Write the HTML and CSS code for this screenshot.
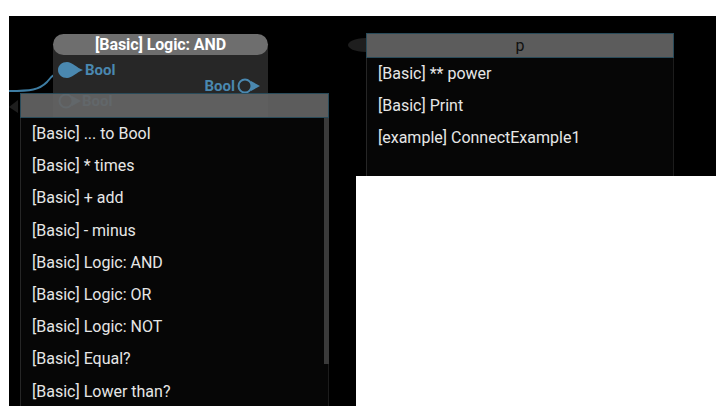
FILE: index.html
```html
<!DOCTYPE html>
<html>
<head>
<meta charset="utf-8">
<link rel="stylesheet" href="styles.css">
</head>
<body>
<div class="canvas">
  <svg class="wires" width="707" height="390" viewBox="0 0 707 390">
    <path d="M0 75 C 22 75, 30 74, 38 66 C 44 58, 50 54, 58 54" fill="none" stroke="#3d7ca2" stroke-width="2"/>
    <path d="M0 91 L9 84 L9 97 Z" fill="#1e1e1e"/>
    <path d="M357 22 C 345 22, 339 26, 339 29 C 339 32, 345 36, 357 36 Z" fill="#1e1e1e"/>
  </svg>

  <div class="node">
    <div class="node-body"></div>
    <div class="node-title">[Basic] Logic: AND</div>
    <div class="slot slot-in">
      <svg class="pin" width="28" height="18" viewBox="0 0 28 18"><path d="M10 1 C 5 1, 1 4.5, 1 9 C 1 13.5, 5 17, 10 17 C 15 17, 20 11, 26 9 C 20 7, 15 1, 10 1 Z" fill="#4a88b0"/></svg>
      <span>Bool</span>
    </div>
    <div class="slot slot-out">
      <span>Bool</span>
      <svg class="pin" width="24" height="16" viewBox="0 0 24 16"><circle cx="8" cy="8" r="6.5" fill="none" stroke="#4a88b0" stroke-width="2"/><path d="M14 3 L23 8 L14 13 Z" fill="#4a88b0"/></svg>
    </div>
    <div class="slot slot-in faint">
      <svg class="pin" width="24" height="16" viewBox="0 0 24 16"><circle cx="8" cy="8" r="6.5" fill="none" stroke="#4a88b0" stroke-width="2"/><path d="M14 3 L23 8 L14 13 Z" fill="#4a88b0"/></svg>
      <span>Bool</span>
    </div>
  </div>

  <div class="menu menu-left">
    <div class="menu-head"></div>
    <div class="menu-list">
      <div class="item">[Basic] ... to Bool</div>
      <div class="item">[Basic] * times</div>
      <div class="item">[Basic] + add</div>
      <div class="item">[Basic] - minus</div>
      <div class="item">[Basic] Logic: AND</div>
      <div class="item">[Basic] Logic: OR</div>
      <div class="item">[Basic] Logic: NOT</div>
      <div class="item">[Basic] Equal?</div>
      <div class="item">[Basic] Lower than?</div>
    </div>
    <div class="scrollbar"></div>
  </div>

  <div class="menu menu-right">
    <div class="menu-head">p</div>
    <div class="menu-list">
      <div class="item">[Basic] ** power</div>
      <div class="item">[Basic] Print</div>
      <div class="item">[example] ConnectExample1</div>
    </div>
  </div>

  <div class="blank"></div>
</div>
</body>
</html>
```

FILE: styles.css
```css
html, body {
  margin: 0;
  padding: 0;
  background: #ffffff;
}
body {
  padding: 16px 0 0 9px;
  font-family: Roboto, "Liberation Sans", sans-serif;
}
.canvas {
  position: relative;
  width: 707px;
  height: 390px;
  background: #000000;
  overflow: hidden;
}
.wires {
  position: absolute;
  left: 0;
  top: 0;
}
.node {
  position: absolute;
  left: 44px;
  top: 18px;
  width: 215px;
  display: flex;
  flex-direction: column;
}
.node-body {
  position: absolute;
  left: 0;
  top: 10px;
  width: 215px;
  height: 86px;
  background: #272727;
  border-radius: 0 0 10px 10px;
}
.node-title {
  position: relative;
  height: 21px;
  line-height: 21px;
  background: #6e6e6e;
  border-radius: 11px;
  color: #ffffff;
  font-weight: bold;
  font-size: 16px;
  text-align: center;
  letter-spacing: -0.1px;
}
.slot {
  position: relative;
  display: flex;
  align-items: center;
  height: 16px;
  font-size: 15px;
  font-weight: bold;
  color: #4a88b0;
}
.slot-in {
  padding-left: 4px;
  margin-top: 7px;
}
.slot-out {
  justify-content: flex-end;
  padding-right: 7px;
  margin-top: 0;
}
.slot-out span {
  margin-right: 2px;
}
.faint {
  margin-top: -1px;
  padding-left: 5px;
}
.menu {
  position: absolute;
  display: flex;
  flex-direction: column;
}
.menu-left {
  left: 11px;
  top: 77px;
  width: 309px;
  height: 330px;
}
.menu-right {
  left: 357px;
  top: 17px;
  width: 308px;
  height: 200px;
}
.menu-head {
  flex-shrink: 0;
  height: 23px;
  line-height: 23px;
  background: rgba(100, 100, 100, 0.92);
  border: 1px solid #294b5a;
  color: #111111;
  font-size: 16px;
  text-align: center;
}
.menu-list {
  flex: 1;
  background: #060606;
  border-left: 1px solid #262626;
  border-right: 1px solid #1c1c1c;
  padding-left: 11px;
}
.item {
  height: 32.2px;
  line-height: 32px;
  color: #e6e6e6;
  font-size: 16px;
  white-space: nowrap;
}
.scrollbar {
  position: absolute;
  right: 0;
  top: 25px;
  width: 5px;
  height: 246px;
  background: #3a3a3a;
}
.blank {
  position: absolute;
  left: 347px;
  top: 160px;
  width: 400px;
  height: 300px;
  background: #ffffff;
}
```
